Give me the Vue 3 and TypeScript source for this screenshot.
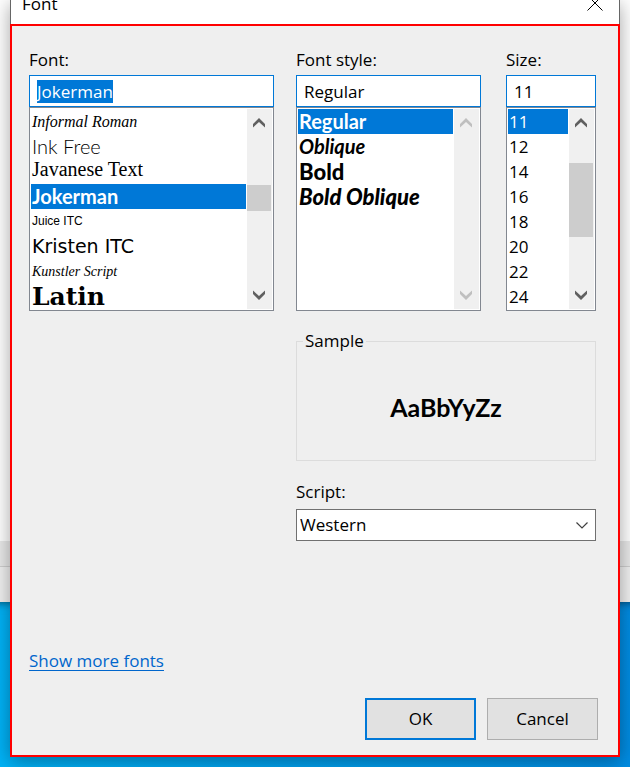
<script setup lang="ts">
import { onMounted, ref } from 'vue'

interface Entry {
  label: string
  face: string
}

interface Column {
  id: string
  label: string
  entries: Entry[]
  thumb: { top: number; height: number } | null
}

const columns: Column[] = [
  {
    id: 'font',
    label: 'Font:',
    entries: [
      { label: 'Informal Roman', face: 'informal' },
      { label: 'Ink Free', face: 'ink' },
      { label: 'Javanese Text', face: 'javanese' },
      { label: 'Jokerman', face: 'joker' },
      { label: 'Juice ITC', face: 'juice' },
      { label: 'Kristen ITC', face: 'kristen' },
      { label: 'Kunstler Script', face: 'kunstler' },
      { label: 'Latin', face: 'latin' },
    ],
    thumb: { top: 76, height: 26 },
  },
  {
    id: 'style',
    label: 'Font style:',
    entries: [
      { label: 'Regular', face: 'joker' },
      { label: 'Oblique', face: 'joker-oblique' },
      { label: 'Bold', face: 'joker-bold' },
      { label: 'Bold Oblique', face: 'joker-bold-oblique' },
    ],
    thumb: null,
  },
  {
    id: 'size',
    label: 'Size:',
    entries: ['11', '12', '14', '16', '18', '20', '22', '24'].map((label) => ({ label, face: 'plain' })),
    thumb: { top: 54, height: 74 },
  },
]

const selected = ref<Record<string, string>>({ font: 'Jokerman', style: 'Regular', size: '11' })
const script = ref('Western')

onMounted(() => {
  const field = document.getElementById('font-input') as HTMLInputElement | null
  field?.focus()
  field?.select()
})
</script>

<template>
  <div class="desktop">
    <div class="back-window">
      <div class="back-page"></div>
      <div class="back-strip"></div>
      <div class="back-status"></div>
    </div>

    <form class="dialog" aria-labelledby="dialog-title" @submit.prevent>
      <header class="titlebar">
        <h1 id="dialog-title">Font</h1>
        <button type="button" class="close" aria-label="Close">
          <svg viewBox="0 0 16 16" width="16" height="16"><path d="M0.5 0.5 15.5 15.5M15.5 0.5 0.5 15.5" /></svg>
        </button>
      </header>

      <div class="body">
        <div class="pickers">
          <div v-for="col in columns" :key="col.id" class="picker" :class="col.id">
            <label :for="col.id + '-input'">{{ col.label }}</label>
            <input :id="col.id + '-input'" v-model="selected[col.id]" type="text" autocomplete="off" spellcheck="false" />
            <div class="listbox">
              <ul role="listbox" :aria-label="col.label">
                <li
                  v-for="entry in col.entries"
                  :key="entry.label"
                  role="option"
                  :aria-selected="selected[col.id] === entry.label"
                  :class="[entry.face, { chosen: selected[col.id] === entry.label }]"
                  @click="selected[col.id] = entry.label"
                >{{ entry.label }}</li>
              </ul>
              <div class="scrollbar" :class="{ idle: !col.thumb }">
                <button type="button" tabindex="-1" aria-label="Scroll up">
                  <svg viewBox="0 0 12 10" width="12" height="10"><path d="M0 6 6 0 12 6V9.5L6 4 0 9.5Z" /></svg>
                </button>
                <button type="button" tabindex="-1" aria-label="Scroll down">
                  <svg viewBox="0 0 12 10" width="12" height="10"><path d="M0 4 6 10 12 4V0.5L6 6 0 0.5Z" /></svg>
                </button>
                <div
                  v-if="col.thumb"
                  class="thumb"
                  :style="{ top: col.thumb.top + 'px', height: col.thumb.height + 'px' }"
                ></div>
              </div>
            </div>
          </div>

          <div class="details">
            <fieldset>
              <legend>Sample</legend>
              <p class="sample">AaBbYyZz</p>
            </fieldset>
            <label for="script">Script:</label>
            <div class="combo">
              <select id="script" v-model="script">
                <option>Western</option>
              </select>
              <svg viewBox="0 0 12 7" width="12" height="7"><path d="M0.5 0.5 6 6 11.5 0.5" /></svg>
            </div>
          </div>
        </div>

        <a class="more" href="#">Show more fonts</a>

        <footer class="actions">
          <button type="submit" class="default">OK</button>
          <button type="button">Cancel</button>
        </footer>
      </div>
    </form>
  </div>
</template>

<style>
body {
  margin: 0;
  background: #fff;
}
</style>

<style scoped>
* {
  box-sizing: border-box;
}

.desktop {
  position: relative;
  padding: 0 10px 10px;
  overflow: hidden;
  background: linear-gradient(90deg, #00b2f6, #008ce2);
  color: #000;
  font: 17px/24px "Open Sans", "Noto Sans", sans-serif;
}

.back-window {
  position: absolute;
  top: 0;
  left: -20px;
  right: -20px;
  height: 602px;
  display: flex;
  flex-direction: column;
  box-shadow: 0 1px 8px rgba(0, 0, 0, 0.5);
}

.back-page {
  flex: 1;
  background: #fff;
}

.back-strip {
  height: 25px;
  background: #e9e9e9;
}

.back-status {
  height: 36px;
  border-top: 1px solid #cfcfcf;
  background: #f0f0f0;
}

.dialog {
  position: relative;
  margin: 0;
  box-shadow: 0 4px 18px rgba(0, 0, 0, 0.36);
}

.titlebar {
  display: flex;
  justify-content: space-between;
  align-items: flex-end;
  height: 24px;
  padding: 0 16px 8px 11px;
  border: solid #666;
  border-width: 0 1px;
  overflow: hidden;
  background: #fff;
}

h1 {
  margin: 0;
  font: inherit;
}

.close {
  display: flex;
  padding: 0 0 5px;
  border: 0;
  background: none;
}

.close path {
  fill: none;
  stroke: #000;
}

.body {
  display: flex;
  flex-direction: column;
  padding: 22px 20px 15px 17px;
  border: 2px solid #f00;
  background: #efefef;
}

.pickers {
  display: grid;
  grid-template-columns: minmax(0, 245fr) minmax(0, 185fr) minmax(0, 93fr);
  gap: 18px 22px;
  padding-right: 2px;
}

.picker {
  display: flex;
  flex-direction: column;
}

.picker.size {
  padding-left: 3px;
}

.picker label {
  margin-bottom: 3px;
}

.picker input {
  width: 100%;
  height: 32px;
  padding: 0 7px;
  border: 1px solid #0078d7;
  border-radius: 0;
  outline: none;
  background: #fff;
  color: #000;
  font: inherit;
}

.picker input::selection {
  background: #0078d7;
  color: #fff;
}

.listbox {
  display: flex;
  gap: 1px;
  padding: 1px;
  border: 1px solid #828790;
  background: #fff;
}

ul {
  flex: 1;
  min-width: 0;
  height: 200px;
  margin: 0;
  padding: 0;
  list-style: none;
}

li {
  height: 25px;
  padding-left: 1px;
  line-height: 25px;
  white-space: nowrap;
}

li.chosen {
  background: #0078d7;
  color: #fff;
}

.informal {
  font-family: "Liberation Serif", serif;
  font-size: 16px;
  font-style: italic;
}

.ink {
  font-family: Lato, sans-serif;
  font-size: 20px;
  font-weight: 300;
}

.javanese {
  font-family: "Liberation Serif", serif;
  font-size: 20px;
  line-height: 20px;
}

.joker,
.joker-oblique,
.joker-bold,
.joker-bold-oblique,
.sample {
  font-family: Lato, sans-serif;
  font-size: 20px;
  font-weight: 700;
}

.joker-bold,
.joker-bold-oblique {
  font-size: 22px;
  font-weight: 900;
}

.joker-oblique,
.joker-bold-oblique {
  font-style: italic;
}

.juice {
  font-family: "Liberation Sans Narrow", "Liberation Sans", sans-serif;
  font-size: 12px;
}

.kristen {
  font-family: "DejaVu Sans", sans-serif;
  font-size: 19px;
}

.kunstler {
  font-family: "Liberation Serif", serif;
  font-size: 14px;
  font-style: italic;
}

.latin {
  font-family: "DejaVu Serif", serif;
  font-size: 25px;
  font-weight: 700;
}

.scrollbar {
  position: relative;
  display: flex;
  flex-direction: column;
  justify-content: space-between;
  width: 25px;
  background: #f0f0f0;
}

.scrollbar button {
  display: flex;
  justify-content: center;
  align-items: center;
  width: 24px;
  height: 28px;
  padding: 0;
  border: 0;
  background: none;
}

.scrollbar path {
  fill: #606060;
}

.scrollbar.idle path {
  fill: #bfbfbf;
}

.thumb {
  position: absolute;
  left: 0;
  width: 24px;
  background: #cdcdcd;
}

.details {
  grid-column: 2 / 4;
  display: flex;
  flex-direction: column;
}

fieldset {
  min-width: 0;
  height: 132px;
  margin: 0 0 19px;
  padding: 0 6px;
  border: 1px solid #dcdcdc;
}

legend {
  padding: 0 2px;
}

.sample {
  margin: 0;
  padding-top: 42px;
  font-size: 25px;
  text-align: center;
}

.combo {
  position: relative;
  margin-top: 5px;
}

.combo select {
  display: block;
  width: 100%;
  height: 32px;
  padding: 0 3px;
  border: 1px solid #707070;
  border-radius: 0;
  appearance: none;
  background: #fff;
  color: #000;
  font: inherit;
}

.combo svg {
  position: absolute;
  top: 13px;
  right: 8px;
  pointer-events: none;
}

.combo path {
  fill: none;
  stroke: #404040;
  stroke-width: 1.2;
}

.more {
  align-self: flex-start;
  margin: 108px 0 25px;
  color: #0066cc;
  text-underline-offset: 3px;
  text-decoration-thickness: 1px;
}

.actions {
  display: flex;
  justify-content: flex-end;
  gap: 11px;
}

.actions button {
  width: 111px;
  height: 42px;
  padding: 0;
  border: 1px solid #adadad;
  border-radius: 0;
  background: #e1e1e1;
  color: #000;
  font: inherit;
}

.actions .default {
  border: 2px solid #0078d7;
}
</style>
